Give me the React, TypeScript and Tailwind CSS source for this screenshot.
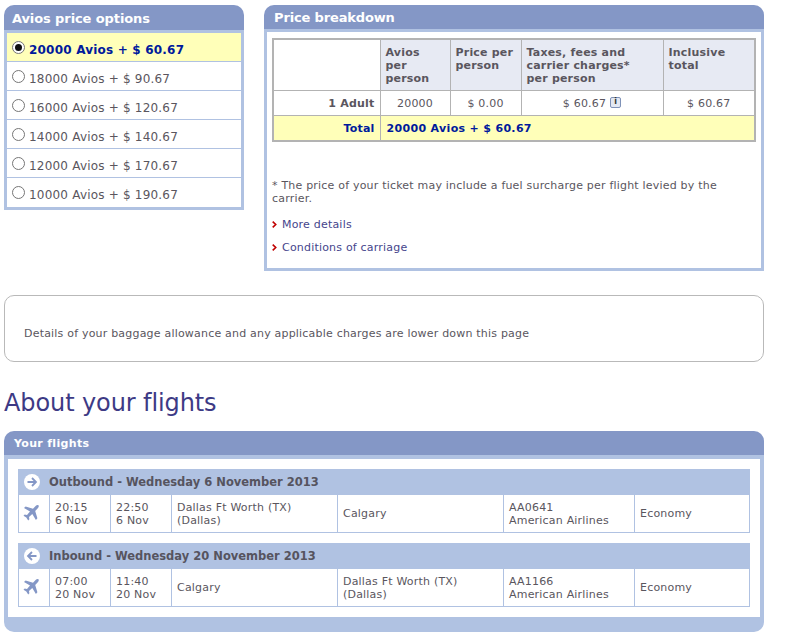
import React from "react";

const options = [
  "20000 Avios + $ 60.67",
  "18000 Avios + $ 90.67",
  "16000 Avios + $ 120.67",
  "14000 Avios + $ 140.67",
  "12000 Avios + $ 170.67",
  "10000 Avios + $ 190.67",
];

const flights = [
  {
    title: "Outbound - Wednesday 6 November 2013",
    dir: "right",
    dep: ["20:15", "6 Nov"],
    arr: ["22:50", "6 Nov"],
    from: ["Dallas Ft Worth (TX)", "(Dallas)"],
    to: ["Calgary"],
    no: "AA0641",
  },
  {
    title: "Inbound - Wednesday 20 November 2013",
    dir: "left",
    dep: ["07:00", "20 Nov"],
    arr: ["11:40", "20 Nov"],
    from: ["Calgary"],
    to: ["Dallas Ft Worth (TX)", "(Dallas)"],
    no: "AA1166",
  },
];

const Plane = () => (
  <svg width="16" height="16" viewBox="0 0 16 16" className="block">
    <path
      fill="#8497c6"
      d="M15.6.4c-.8-.6-2.2-.2-3 .7L10 3.7 2.6 1.5 1 3l6 3.6-3 3.3-2.3-.4L.5 10.7l2.8 1.9 1.9 2.8 1.2-1.2-.4-2.3 3.3-3 3.6 6 1.5-1.6-2.2-7.4 2.6-2.6c.9-.8 1.3-2.2.7-3z"
    />
  </svg>
);

const Arrow = ({ dir }: { dir: string }) => (
  <svg width="16" height="16" viewBox="0 0 16 16" className="block">
    <circle cx="8" cy="8" r="8" fill="#fff" />
    <path
      d={dir === "right" ? "M3.5 8h8M8 4l4 4-4 4" : "M12.5 8h-8M8 4L4 8l4 4"}
      fill="none"
      stroke="#8497c6"
      strokeWidth="1.8"
    />
  </svg>
);

const Chevron = () => (
  <svg width="5" height="7" viewBox="0 0 5 7" className="block">
    <path d="M.7.7L3.7 3.5.7 6.3" fill="none" stroke="#c00000" strokeWidth="1.6" />
  </svg>
);

const Lines = ({ lines }: { lines: string[] }) => (
  <>
    {lines.map((l) => (
      <div key={l}>{l}</div>
    ))}
  </>
);

export default function App() {
  return (
    <div className="w-[785px] h-[638px] overflow-hidden bg-white pl-1 pt-[5px] text-[11px] leading-[13px] tracking-[0.2px] text-[#5a565e] font-['DejaVu_Sans','Liberation_Sans',sans-serif]">
      <div className="flex items-start gap-5 w-[760px]">
        <div className="w-[240px] shrink-0">
          <h2 className="h-[25px] rounded-t-[10px] bg-[#8497c6] pl-2 pt-[6px] text-[13px] leading-[16px] tracking-[-0.1px] font-bold text-white">
            Avios price options
          </h2>
          <div className="border-[3px] border-[#b0c2e2]">
            {options.map((o, i) => (
              <label
                key={o}
                className={
                  i === 0
                    ? "flex h-[29px] items-center gap-[4px] border-b border-[#b0c2e2] bg-[#ffffb9] pl-[5px] pt-[6px] text-[12px] font-bold text-[#001a9c]"
                    : "flex h-[29px] items-center gap-[4px] border-b border-[#b0c2e2] last:border-b-0 pl-[5px] pt-[6px] text-[12px]"
                }
              >
                <span className="flex size-[13px] -translate-y-[3px] items-center justify-center rounded-full border border-[#767676] bg-white">
                  {i === 0 && <span className="size-[7px] rounded-full bg-[#111]" />}
                </span>
                {o}
              </label>
            ))}
          </div>
        </div>

        <div className="w-[500px]">
          <h2 className="h-[24px] rounded-t-[10px] bg-[#8497c6] pl-[10px] pt-[5px] text-[13px] leading-[16px] tracking-[-0.15px] font-bold text-white">
            Price breakdown
          </h2>
          <div className="h-[242px] border-[3px] border-[#b0c2e2] px-[5px] pt-[6px]">
            <table className="w-[484px] table-fixed border-collapse border-2 border-[#b3b3b3]">
              <colgroup>
                <col className="w-[107px]" />
                <col className="w-[70px]" />
                <col className="w-[71px]" />
                <col className="w-[142px]" />
                <col />
              </colgroup>
              <tbody>
                <tr className="h-[51px] align-top font-bold">
                  <td className="border border-[#b3b3b3] bg-white" />
                  <td className="border border-[#b3b3b3] bg-[#e7eaf3] px-[5px] pt-[6px]">Avios per person</td>
                  <td className="border border-[#b3b3b3] bg-[#e7eaf3] pl-[5px] pt-[6px]">Price per person</td>
                  <td className="border border-[#b3b3b3] bg-[#e7eaf3] pl-[5px] pr-[20px] pt-[6px]">Taxes, fees and carrier charges* per person</td>
                  <td className="border border-[#b3b3b3] bg-[#e7eaf3] px-[5px] pt-[6px]">Inclusive total</td>
                </tr>
                <tr className="h-[25px] text-center">
                  <td className="border border-[#b3b3b3] pr-[5px] pt-[1px] text-right font-bold">1 Adult</td>
                  <td className="border border-[#b3b3b3] pt-[1px]">20000</td>
                  <td className="border border-[#b3b3b3] pt-[1px]">$ 0.00</td>
                  <td className="border border-[#b3b3b3] pt-[1px]">
                    <span className="inline-flex items-center gap-[4px]">
                      $ 60.67
                      <span className="flex size-[11px] -translate-y-[1px] items-center justify-center rounded-[2px] border border-[#7f92b8] bg-[#e3e8f2] text-[8px] leading-none font-bold text-[#333]">
                        i
                      </span>
                    </span>
                  </td>
                  <td className="border border-[#b3b3b3] pt-[1px]">$ 60.67</td>
                </tr>
                <tr className="h-[26px] bg-[#ffffb9] font-bold text-[#001a9c]">
                  <td className="border border-[#b3b3b3] pr-[5px] pt-[1px] text-right">Total</td>
                  <td colSpan={4} className="pl-[6px] pt-[1px] tracking-[0.33px]">20000 Avios + $ 60.67</td>
                </tr>
              </tbody>
            </table>
            <p className="mt-[37px]">* The price of your ticket may include a fuel surcharge per flight levied by the carrier.</p>
            <a className="mt-[13px] flex items-center gap-[5px] text-[#45458c]">
              <Chevron />
              More details
            </a>
            <a className="mt-[10px] flex items-center gap-[5px] text-[#45458c]">
              <Chevron />
              Conditions of carriage
            </a>
          </div>
        </div>
      </div>

      <div className="mt-6 flex h-[67px] w-[760px] items-center rounded-[10px] border border-[#b9b9b9] pl-[19px] pt-[9px]">
        Details of your baggage allowance and any applicable charges are lower down this page
      </div>

      <h1 className="mt-[25px] text-[24px] leading-[32px] tracking-[-0.1px] font-normal text-[#3d3a85]">About your flights</h1>

      <div className="mt-[12px] w-[760px]">
        <h2 className="h-[24px] rounded-t-[10px] bg-[#8497c6] pl-[10px] pt-[6px] text-[11px] leading-[14px] tracking-[0.33px] font-bold text-white">
          Your flights
        </h2>
        <div className="rounded-b-[10px] border-x-4 border-t-4 border-b-[15px] border-[#b0c2e2] px-[10px] pt-[10px] pb-[10px]">
          <div className="flex flex-col gap-[10px]">
            {flights.map((f) => (
              <div key={f.no}>
                <div className="flex h-[26px] items-center gap-[9px] bg-[#b0c2e2] pl-[6px] text-[11.5px] tracking-normal font-bold text-[#56545f]">
                  <Arrow dir={f.dir} />
                  {f.title}
                </div>
                <div className="grid h-[38px] grid-cols-[30px_61px_61px_166px_166px_131px_115px] items-stretch border-x border-b border-[#b0c2e2]">
                  <div className="flex items-center justify-center pr-[6px] pb-[2px]">
                    <Plane />
                  </div>
                  <div className="flex flex-col justify-center border-l border-[#b0c2e2] pl-[5px]">
                    <Lines lines={f.dep} />
                  </div>
                  <div className="flex flex-col justify-center border-l border-[#b0c2e2] pl-[5px]">
                    <Lines lines={f.arr} />
                  </div>
                  <div className="flex flex-col justify-center border-l border-[#b0c2e2] pl-[5px]">
                    <Lines lines={f.from} />
                  </div>
                  <div className="flex flex-col justify-center border-l border-[#b0c2e2] pl-[5px]">
                    <Lines lines={f.to} />
                  </div>
                  <div className="flex flex-col justify-center border-l border-[#b0c2e2] pl-[5px]">
                    <Lines lines={[f.no, "American Airlines"]} />
                  </div>
                  <div className="flex flex-col justify-center border-l border-[#b0c2e2] pl-[5px]">Economy</div>
                </div>
              </div>
            ))}
          </div>
        </div>
      </div>
    </div>
  );
}
